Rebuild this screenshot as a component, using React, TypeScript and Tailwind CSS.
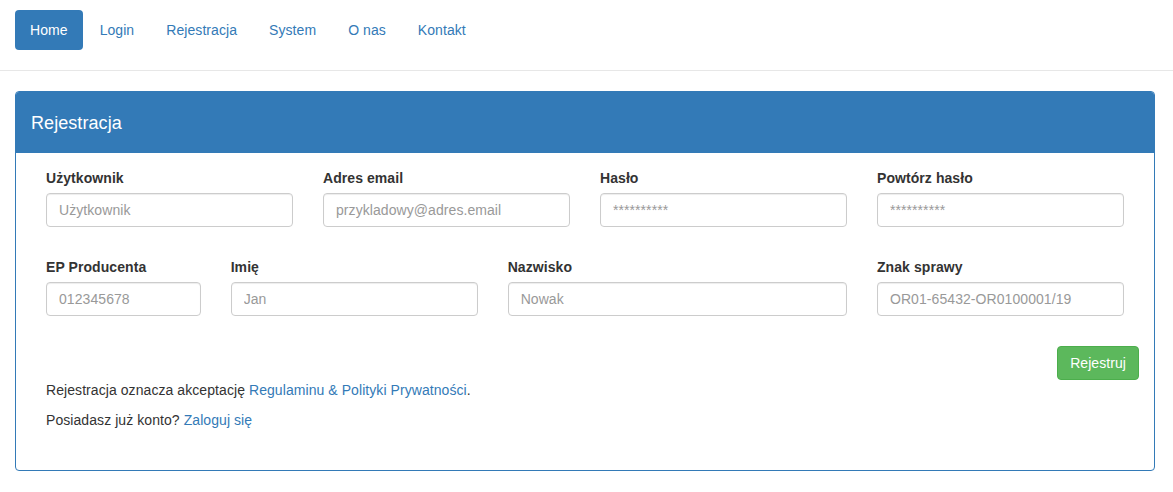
import React from 'react';

const navItems = ['Home', 'Login', 'Rejestracja', 'System', 'O nas', 'Kontakt'];

function Field({ label, placeholder, type = 'text' }: { label: string; placeholder: string; type?: string }) {
  return (
    <div className="flex flex-col">
      <label className="mb-[5px] block font-bold leading-[20px] text-[#333]">{label}</label>
      <input
        type={type}
        placeholder={placeholder}
        className="h-[34px] w-full rounded-[4px] border border-[#ccc] bg-white px-[12px] py-[6px] text-[14px] text-[#555] shadow-[inset_0_1px_1px_rgba(0,0,0,0.075)] outline-none placeholder:text-[#999]"
      />
    </div>
  );
}

export default function App() {
  return (
    <div className="min-h-screen bg-white font-['Liberation_Sans',Arial,sans-serif] text-[14px] leading-[20px] tracking-[0.07px] text-[#333]">
      <nav className="border-b border-[#e7e7e7] px-[15px] pt-[10px] pb-[20px]">
        <ul className="flex gap-[2px]">
          {navItems.map((item, i) => (
            <li key={item}>
              <a
                href="#"
                className={
                  i === 0
                    ? 'block rounded-[4px] bg-[#337ab7] px-[15px] py-[10px] text-white'
                    : 'block rounded-[4px] px-[15px] py-[10px] text-[#337ab7]'
                }
              >
                {item}
              </a>
            </li>
          ))}
        </ul>
      </nav>

      <main className="px-[15px] pt-[20px]">
        <div className="w-[1140px] overflow-hidden rounded-[4px] border border-[#337ab7]">
          <div className="flex h-[61px] items-center bg-[#337ab7] px-[15px] text-[18px] text-white">Rejestracja</div>

          <div className="px-[15px] pt-[15px] pb-[40px]">
            <div className="grid grid-cols-4 gap-x-[30px] px-[15px]">
              <Field label="Użytkownik" placeholder="Użytkownik" />
              <Field label="Adres email" placeholder="przykladowy@adres.email" />
              <Field label="Hasło" placeholder="**********" type="password" />
              <Field label="Powtórz hasło" placeholder="**********" type="password" />
            </div>

            <div className="mt-[30px] grid grid-cols-12 gap-x-[30px] px-[15px]">
              <div className="col-span-2">
                <Field label="EP Producenta" placeholder="012345678" />
              </div>
              <div className="col-span-3">
                <Field label="Imię" placeholder="Jan" />
              </div>
              <div className="col-span-4">
                <Field label="Nazwisko" placeholder="Nowak" />
              </div>
              <div className="col-span-3">
                <Field label="Znak sprawy" placeholder="OR01-65432-OR0100001/19" />
              </div>
            </div>

            <div className="mt-[30px] flex justify-end">
              <button className="h-[34px] rounded-[4px] border border-[#4cae4c] bg-[#5cb85c] px-[12px] text-[14px] text-white">
                Rejestruj
              </button>
            </div>

            <div className="px-[15px]">
              <p className="mb-[10px]">
                Rejestracja oznacza akceptację{' '}
                <a href="#" className="text-[#337ab7]">
                  Regulaminu &amp; Polityki Prywatności
                </a>
                .
              </p>
              <p>
                Posiadasz już konto?{' '}
                <a href="#" className="text-[#337ab7]">
                  Zaloguj się
                </a>
              </p>
            </div>
          </div>
        </div>
      </main>
    </div>
  );
}
